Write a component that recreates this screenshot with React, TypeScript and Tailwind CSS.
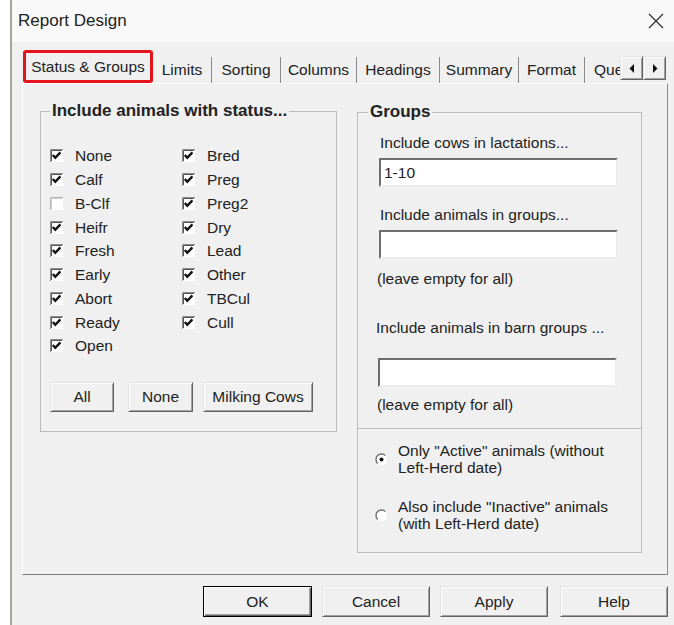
import type { ReactNode } from "react";

type Status = { label: string; checked: boolean };

const leftColumn: Status[] = [
  { label: "None", checked: true },
  { label: "Calf", checked: true },
  { label: "B-Clf", checked: false },
  { label: "Heifr", checked: true },
  { label: "Fresh", checked: true },
  { label: "Early", checked: true },
  { label: "Abort", checked: true },
  { label: "Ready", checked: true },
  { label: "Open", checked: true },
];

const rightColumn: Status[] = [
  { label: "Bred", checked: true },
  { label: "Preg", checked: true },
  { label: "Preg2", checked: true },
  { label: "Dry", checked: true },
  { label: "Lead", checked: true },
  { label: "Other", checked: true },
  { label: "TBCul", checked: true },
  { label: "Cull", checked: true },
];

const tabs = [
  { label: "Limits", width: "w-[59px]" },
  { label: "Sorting", width: "w-[69px]" },
  { label: "Columns", width: "w-[76px]" },
  { label: "Headings", width: "w-[83px]" },
  { label: "Summary", width: "w-[79px]" },
  { label: "Format", width: "w-[66px]" },
];

const raised =
  "border border-t-[#e3e3e3] border-l-[#e3e3e3] border-b-[#646464] border-r-[#646464] shadow-[inset_1px_1px_0_#fff,inset_-1px_-1px_0_#a0a0a0]";

function CheckBox({ checked }: { checked: boolean }) {
  return (
    <svg width="13" height="13" viewBox="0 0 13 13" className="shrink-0">
      <rect width="13" height="13" fill="#fff" />
      <path d="M0.5 13V0.5H13" fill="none" stroke={checked ? "#8c8c8c" : "#b4b4b4"} />
      <path d="M1.5 12V1.5H12" fill="none" stroke={checked ? "#555" : "#d0d0d0"} />
      {checked && <path d="M2.8 6L5.3 8.8L10.4 3.4" fill="none" stroke="#111" strokeWidth="2.4" />}
    </svg>
  );
}

function Radio({ on }: { on: boolean }) {
  return (
    <svg width="13" height="13" viewBox="0 0 13 13" className="shrink-0">
      <circle cx="6.5" cy="6.5" r="5.5" fill="#fff" />
      <path d="M2.6 10.4A5.5 5.5 0 0 1 10.4 2.6" fill="none" stroke="#6e6e6e" strokeWidth="1.4" />
      {on && <circle cx="6.5" cy="6.5" r="2" fill="#111" />}
    </svg>
  );
}

function Button({ children, className = "" }: { children: ReactNode; className?: string }) {
  return (
    <button className={"h-[30px] bg-[#f0f0f0] text-[15.5px] text-[#222] " + raised + " " + className}>
      {children}
    </button>
  );
}

function TextBox({ value = "", className = "" }: { value?: string; className?: string }) {
  return (
    <div
      className={
        "flex h-[29px] w-[239px] items-center border-2 border-t-[#6d6d6d] border-l-[#6d6d6d] border-b-[#ececec] border-r-[#ececec] bg-white pl-[3px] text-[15.5px] " +
        className
      }
    >
      {value}
    </div>
  );
}

function StatusColumn({ items, className = "" }: { items: Status[]; className?: string }) {
  return (
    <div className={"flex flex-col " + className}>
      {items.map((s) => (
        <div key={s.label} className="flex h-[23.75px] items-center gap-[12px]">
          <CheckBox checked={s.checked} />
          <span className="text-[15.5px]">{s.label}</span>
        </div>
      ))}
    </div>
  );
}

function ArrowButton({ dir }: { dir: "left" | "right" }) {
  return (
    <div className={"flex h-[24px] w-[23px] items-center justify-center bg-[#f0f0f0] " + raised}>
      <svg width="6" height="9" viewBox="0 0 6 9">
        {dir === "left" ? <path d="M5 0V9L0.5 4.5Z" fill="#111" /> : <path d="M1 0V9L5.5 4.5Z" fill="#111" />}
      </svg>
    </div>
  );
}

export default function App() {
  return (
    <div className="flex h-[625px] w-[674px] overflow-hidden bg-white font-['Liberation_Sans',Arial,sans-serif] text-[#222]">
      <div className="w-[10px] shrink-0 bg-white" />
      <div className="flex flex-1 flex-col border-l-2 border-[#a3a89b]">
        {/* title bar */}
        <div className="flex h-[42px] shrink-0 items-center justify-between bg-[#f9f9f9] pl-[6px] pr-[10px]">
          <span className="text-[17px]">Report Design</span>
          <svg width="16" height="16" viewBox="0 0 16 16">
            <path d="M1 1L15 15M15 1L1 15" stroke="#333" strokeWidth="1.3" />
          </svg>
        </div>

        <div className="flex-1 bg-[#f0f0f0] pl-[10px] pt-[8px]">
          {/* tab strip */}
          <div className="flex h-[33px] items-end">
            <div className="ml-[1px] flex h-[33px] w-[130px] items-center justify-center rounded-[3px] border-[3px] border-[#e3141c] text-[15.5px]">
              Status &amp; Groups
            </div>
            {tabs.map((t) => (
              <div
                key={t.label}
                className={"flex h-[26px] items-center justify-center border-r border-[#8a8a8a] text-[15.5px] " + t.width}
              >
                {t.label}
              </div>
            ))}
            <div className="flex h-[26px] w-[35px] items-center pl-[9px] text-[15.5px]">Que</div>
            <div className="mb-[3px] flex">
              <ArrowButton dir="left" />
              <ArrowButton dir="right" />
            </div>
          </div>

          {/* tab page */}
          <div className="flex h-[492px] w-[646px] items-start gap-[20px] border border-t-white border-l-white border-b-[#7a7a7a] border-r-[#8a8a8a] pl-[17px] pt-[17px]">
            <fieldset className="h-[331px] w-[297px] border border-[#bcbcbc]">
              <legend className="ml-[9px] px-[2px] text-[17px] font-bold leading-[20px]">Include animals with status...</legend>
              <div className="pl-[9px] pt-[23px]">
                <div className="flex">
                  <StatusColumn items={leftColumn} className="w-[132px]" />
                  <StatusColumn items={rightColumn} />
                </div>
                <div className="mt-[24px] flex">
                  <Button className="w-[64px]">All</Button>
                  <Button className="ml-[14px] w-[65px]">None</Button>
                  <Button className="ml-[10px] w-[110px]">Milking Cows</Button>
                </div>
              </div>
            </fieldset>

            <fieldset className="mt-[1px] h-[451px] w-[285px] border border-[#bcbcbc]">
              <legend className="ml-[10px] px-[2px] text-[17px] font-bold leading-[20px]">Groups</legend>
              <div className="flex flex-col pl-[18px] text-[15.5px] leading-[18px]">
                <span className="ml-[4px] mt-[12px]">Include cows in lactations...</span>
                <TextBox value="1-10" className="ml-[3px] mt-[6px]" />
                <span className="ml-[4px] mt-[19px]">Include animals in groups...</span>
                <TextBox className="ml-[3px] mt-[6px]" />
                <span className="ml-[1px] mt-[11px]">(leave empty for all)</span>
                <span className="mt-[31px]">Include animals in barn groups ...</span>
                <TextBox className="ml-[2px] mt-[21px]" />
                <span className="ml-[1px] mt-[9px]">(leave empty for all)</span>
              </div>
              <div className="mt-[14px] border-t border-[#bcbcbc] shadow-[inset_0_1px_0_#fff]" />
              <div className="flex flex-col gap-[22px] pl-[17px] pt-[13px] text-[15.5px] leading-[17px]">
                <div className="flex items-center gap-[10px]">
                  <Radio on />
                  <span>
                    Only "Active" animals (without
                    <br />
                    Left-Herd date)
                  </span>
                </div>
                <div className="flex items-center gap-[10px]">
                  <Radio on={false} />
                  <span>
                    Also include "Inactive" animals
                    <br />
                    (with Left-Herd date)
                  </span>
                </div>
              </div>
            </fieldset>
          </div>

          {/* dialog buttons */}
          <div className="mt-[11px] flex w-[646px] justify-end gap-[10px]">
            <button className="h-[31px] w-[109px] border border-black bg-[#f0f0f0] text-[15.5px] shadow-[inset_1px_1px_0_#fff,inset_-1px_-1px_0_#646464,inset_-2px_-2px_0_#a0a0a0]">
              OK
            </button>
            <Button className="h-[31px] w-[108px]">Cancel</Button>
            <Button className="h-[31px] w-[108px]">Apply</Button>
            <Button className="ml-[2px] h-[31px] w-[108px]">Help</Button>
          </div>
        </div>
      </div>
    </div>
  );
}
